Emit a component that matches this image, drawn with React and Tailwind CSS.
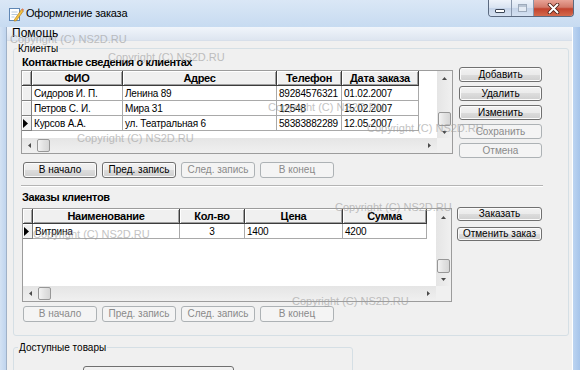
import React from "react";

const SANS = "font-['Liberation_Sans',Arial,sans-serif]";

const clientCols = [
  { title: "ФИО", w: "w-[91px]" },
  { title: "Адрес", w: "w-[154px]" },
  { title: "Телефон", w: "w-[65px]" },
  { title: "Дата заказа", w: "w-[77px]" },
];
const clientRows = [
  ["Сидоров И. П.", "Ленина 89", "89284576321", "01.02.2007"],
  ["Петров С. И.", "Мира 31", "12548", "15.02.2007"],
  ["Курсов А.А.", "ул. Театральная 6", "58383882289", "12.05.2007"],
];

const orderCols = [
  { title: "Наименование", w: "w-[147px]" },
  { title: "Кол-во", w: "w-[65px]", center: true },
  { title: "Цена", w: "w-[98px]" },
  { title: "Сумма", w: "w-[84px]" },
];
const orderRows = [["Витрина", "3", "1400", "4200"]];

const Btn = ({ children, disabled, className = "" }) => (
  <button
    type="button"
    className={`flex items-center justify-center rounded-[3px] border text-[10px] leading-none ${SANS} ${
      disabled
        ? "border-[#adb2b5] bg-[#f4f4f4] text-[#8a8a8a]"
        : "border-[#707070] bg-[linear-gradient(#f2f2f2_0%,#ebebeb_50%,#dddddd_50%,#cfcfcf_100%)] text-black shadow-[inset_0_0_0_1px_#fbfbfb]"
    } ${className}`}
  >
    {children}
  </button>
);

const Arrow = ({ dir }) => {
  if (dir === "left" || dir === "right") {
    return (
      <svg width="3" height="5" viewBox="0 0 3 5">
        <path d={dir === "left" ? "M3 0L0 2.5L3 5Z" : "M0 0L3 2.5L0 5Z"} fill="#4a4a4a" />
      </svg>
    );
  }
  return (
    <svg width="5" height="3" viewBox="0 0 5 3">
      <path d={dir === "up" ? "M0 3L2.5 0L5 3Z" : "M0 0L2.5 3L5 0Z"} fill="#4a4a4a" />
    </svg>
  );
};

const Thumb = ({ className }) => (
  <div
    className={`rounded-[2px] border border-[#979797] bg-[linear-gradient(90deg,#f3f3f3,#e2e2e2_50%,#d6d6d6)] ${className}`}
  />
);

const VScroll = ({ upH, downH }) => (
  <div className="flex w-[15px] flex-col bg-[linear-gradient(90deg,#e5e5e5,#f0f0f0)]">
    <div className={`flex items-center justify-center ${upH}`}>
      <Arrow dir="up" />
    </div>
    <div className="flex flex-1 flex-col justify-end px-[1px]">
      <Thumb className="h-[14px] w-[13px]" />
    </div>
    <div className={`flex items-center justify-center ${downH}`}>
      <Arrow dir="down" />
    </div>
  </div>
);

const HScroll = () => (
  <div className="flex flex-1 items-center bg-[linear-gradient(#e5e5e5,#f0f0f0)]">
    <div className="flex w-[14px] items-center justify-center">
      <Arrow dir="left" />
    </div>
    <Thumb className="ml-[1px] h-[13px] w-[13px]" />
    <div className="flex-1" />
    <div className="flex w-[15px] items-center justify-center">
      <Arrow dir="right" />
    </div>
  </div>
);

const Marker = () => (
  <svg width="5" height="9" viewBox="0 0 5 9" className="ml-[1px]">
    <path d="M0 0L5 4.5L0 9Z" fill="#000" />
  </svg>
);

const Grid = ({ cols, rows, current, className, upH, downH }) => (
  <div className={`flex flex-col border border-[#9c9c9c] bg-white ${className}`}>
    <div className="flex min-h-0 flex-1">
      <div className="flex flex-1 flex-col overflow-hidden">
        <div className="flex h-[15px] shrink-0">
          <div className="h-full w-[10px] shrink-0 border-r border-b border-[#3c3c3c] bg-[#f0f0f0] shadow-[inset_1px_1px_0_#ffffff,inset_-1px_-1px_0_#a0a0a0]" />
          {cols.map((c) => (
            <div
              key={c.title}
              className={`flex h-full shrink-0 items-center justify-center border-r border-b border-[#3c3c3c] bg-[#f0f0f0] text-[11px] font-bold tracking-[-0.3px] shadow-[inset_1px_1px_0_#ffffff,inset_-1px_-1px_0_#a0a0a0] ${c.w}`}
            >
              {c.title}
            </div>
          ))}
        </div>
        {rows.map((r, i) => (
          <div key={i} className="flex h-[15px] shrink-0">
            <div className="flex h-full w-[10px] shrink-0 items-center border-r border-b border-[#808080] bg-[#f0f0f0] shadow-[inset_1px_1px_0_#ffffff]">
              {i === current && <Marker />}
            </div>
            {r.map((v, j) => (
              <div
                key={j}
                className={`flex h-full shrink-0 items-center overflow-hidden whitespace-nowrap border-r border-b border-[#a9a9a9] px-[2px] text-[10px] tracking-[-0.2px] ${
                  cols[j].center ? "justify-center" : ""
                } ${cols[j].w}`}
              >
                {v}
              </div>
            ))}
          </div>
        ))}
      </div>
      <VScroll upH={upH} downH={downH} />
    </div>
    <div className="flex h-[15px] shrink-0">
      <HScroll />
      <div className="w-[15px] bg-[#f0f0f0]" />
    </div>
  </div>
);

const GroupBox = ({ label, className, labelPos, children }) => (
  <div className={`relative rounded-[3px] border border-[#d5dfe5] ${className}`}>
    <span
      className={`absolute top-[-7px] bg-[#f0f0f0] px-[1px] text-[10px] leading-[13px] text-black ${labelPos}`}
    >
      {label}
    </span>
    {children}
  </div>
);

const marks = [
  "left-[10px] top-[33px]",
  "left-[108px] top-[51px]",
  "left-[268px] top-[101px]",
  "left-[77px] top-[132px]",
  "left-[367px] top-[122px]",
  "left-[335px] top-[201px]",
  "left-[33px] top-[228px]",
  "left-[292px] top-[295px]",
];

export default function App() {
  return (
    <div className={`relative flex h-[370px] w-[580px] flex-col overflow-hidden bg-[#c3d8f0] ${SANS}`}>
      {/* title bar */}
      <div className="flex h-[27px] shrink-0 bg-[linear-gradient(#dae7f6,#c7dbf1)]">
        <div className="flex items-center pl-[8px]">
          <svg width="16" height="16" viewBox="0 0 16 16">
            <rect x="1.5" y="2.5" width="10" height="12" fill="#fff" stroke="#5f86b4" />
            <path d="M3.5 6h6M3.5 8.5h6M3.5 11h3" stroke="#b5c8de" />
            <path d="M6.5 13.5L13.5 3.5L15.3 5L8.3 14.8L6 15Z" fill="#f3c444" stroke="#b7801a" strokeWidth="0.7" />
            <path d="M13.5 3.5L14.4 2.3L16 3.7L15.3 5Z" fill="#e07a5a" />
          </svg>
          <span className="ml-[2px] text-[11px] tracking-[-0.2px] text-black">Оформление заказа</span>
        </div>
        <div className="ml-auto mr-[6px] flex h-[17px] self-start overflow-hidden rounded-b-[4px] border border-t-0 border-[#5b6a80]">
          <div className="flex w-[23px] items-center justify-center border-r border-[#8896ab] bg-[linear-gradient(#eef3fa,#d8e3f1_50%,#c4d3e8_50%,#d5e1f1)]">
            <div className="mt-[5px] h-[4px] w-[10px] rounded-[1px] border border-[#3b4656] bg-white" />
          </div>
          <div className="flex w-[22px] items-center justify-center border-r border-[#8896ab] bg-[linear-gradient(#eef3fa,#d8e3f1_50%,#c4d3e8_50%,#d5e1f1)]">
            <div className="h-[8px] w-[9px] border border-[#9daabb] bg-[#e4ebf4] shadow-[inset_0_2px_0_#b9c5d4]" />
          </div>
          <div className="flex w-[39px] items-center justify-center bg-[linear-gradient(#e8a396,#d27a6a_45%,#c2432e_55%,#d46a4c)]">
            <svg width="13" height="11" viewBox="0 0 13 11">
              <path d="M2.5 1.5L10.5 9.5M10.5 1.5L2.5 9.5" stroke="#4a1d14" strokeWidth="3.6" strokeLinecap="round" />
              <path d="M2.5 1.5L10.5 9.5M10.5 1.5L2.5 9.5" stroke="#fff" strokeWidth="2" strokeLinecap="round" />
            </svg>
          </div>
        </div>
      </div>

      <div className="flex min-h-0 flex-1">
        <div className="w-[6px] shrink-0 bg-[linear-gradient(90deg,#d3e2f3,#bfd4ee)]" />
        <div className="flex w-[567px] shrink-0 flex-col border-l border-r border-l-[#9fb1c7] border-r-[#ffffff]">
          {/* menu */}
          <div className="h-[14px] shrink-0 border-b border-[#d7dfea] bg-[linear-gradient(#f1f5fb,#dde5f0)] pl-[5px] text-[12px] leading-[13px] text-black">
            Помощь
          </div>
          <div className="flex-1 bg-[#f0f0f0] pl-[6px] pt-[7px]">
            <GroupBox label="Клиенты" labelPos="left-[3px]" className="h-[288px] w-[556px]">
              <div className="pl-[7px] pt-[6px]">
                <div className="flex">
                  <div className="w-[432px]">
                    <div className="ml-[1px] h-[15px] text-[11px] font-bold leading-[15px] tracking-[-0.4px]">
                      Контактные сведения о клиентах
                    </div>
                    <Grid
                      cols={clientCols}
                      rows={clientRows}
                      current={2}
                      className="h-[84px] w-[432px]"
                      upH="h-[14px]"
                      downH="h-[12px]"
                    />
                    <div className="ml-[2px] mt-[8px] flex gap-[5px]">
                      <Btn className="h-[16px] w-[74px]">В начало</Btn>
                      <Btn className="h-[16px] w-[74px]">Пред. запись</Btn>
                      <Btn disabled className="h-[16px] w-[74px]">След. запись</Btn>
                      <Btn disabled className="h-[16px] w-[74px]">В конец</Btn>
                    </div>
                  </div>
                  <div className="ml-[6px] mt-[12px] flex flex-col gap-[4px]">
                    <Btn className="h-[15px] w-[83px]">Добавить</Btn>
                    <Btn className="h-[15px] w-[83px]">Удалить</Btn>
                    <Btn className="h-[15px] w-[83px]">Изменить</Btn>
                    <Btn disabled className="h-[15px] w-[83px]">Сохранить</Btn>
                    <Btn disabled className="h-[15px] w-[83px]">Отмена</Btn>
                  </div>
                </div>

                <div className="mt-[7px] h-[2px] w-[522px] border-t border-b border-t-[#b4b4b4] border-b-[#ffffff]" />

                <div className="flex">
                  <div className="w-[432px]">
                    <div className="ml-[1px] mt-[3px] h-[15px] text-[11px] font-bold leading-[15px] tracking-[-0.4px]">
                      Заказы клиентов
                    </div>
                    <Grid
                      cols={orderCols}
                      rows={orderRows}
                      current={0}
                      className="ml-[1px] mt-[3px] h-[94px] w-[430px]"
                      upH="h-[16px]"
                      downH="h-[13px]"
                    />
                    <div className="ml-[2px] mt-[4px] flex gap-[5px]">
                      <Btn disabled className="h-[16px] w-[74px]">В начало</Btn>
                      <Btn disabled className="h-[16px] w-[74px]">Пред. запись</Btn>
                      <Btn disabled className="h-[16px] w-[74px]">След. запись</Btn>
                      <Btn disabled className="h-[16px] w-[74px]">В конец</Btn>
                    </div>
                  </div>
                  <div className="ml-[4px] mt-[20px] flex flex-col gap-[6px]">
                    <Btn className="h-[14px] w-[85px]">Заказать</Btn>
                    <Btn className="h-[14px] w-[85px]">Отменить заказ</Btn>
                  </div>
                </div>
              </div>
            </GroupBox>

            <GroupBox label="Доступные товары" labelPos="left-[4px]" className="mt-[11px] h-[40px] w-[340px]">
              <div className="ml-[69px] mt-[18px] h-[20px] w-[151px] rounded-[3px] border border-[#707070] bg-[linear-gradient(#f2f2f2,#e6e6e6)]" />
            </GroupBox>
          </div>
        </div>
        <div className="w-[7px] shrink-0 bg-[linear-gradient(90deg,#bcd4f1,#a6c4ea)]" />
      </div>

      {marks.map((m) => (
        <span
          key={m}
          className={`pointer-events-none absolute whitespace-nowrap text-[11px] leading-[13px] text-[#9c9c9c] opacity-60 ${m}`}
        >
          Copyright (C) NS2D.RU
        </span>
      ))}
    </div>
  );
}
